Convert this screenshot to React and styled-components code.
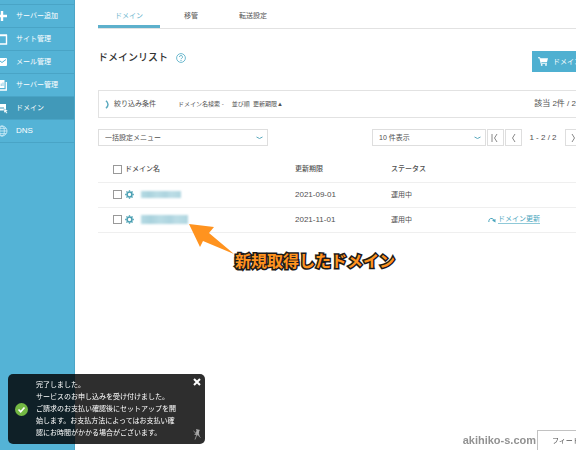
import React from "react";
import styled, { createGlobalStyle } from "styled-components";

const Global = createGlobalStyle`
  * { box-sizing: border-box; }
  body {
    margin: 0;
    background: #fff;
    color: #505050;
    font-family: "Liberation Sans", "Noto Sans CJK JP", sans-serif;
    font-size: 7px;
    line-height: 12px;
    overflow: hidden;
  }
  button, select, input { font: inherit; color: inherit; margin: 0; }
`;

const Page = styled.div`
  display: flex;
  min-height: 100vh;
  overflow: hidden;
`;

const Sidebar = styled.nav`
  flex: 0 0 75px;
  padding-top: 4px;
  background: #54b3d6;
  border-right: 1px solid #4ba5c7;
`;

const NavItem = styled.a`
  display: flex;
  align-items: center;
  gap: 8px;
  height: 23px;
  border-top: 1px solid #49a4c6;
  background: ${(p) => (p.$active ? "#4199b9" : "transparent")};
  color: #fff;
  text-decoration: none;
  white-space: nowrap;
  font-size: ${(p) => (p.$latin ? "8px" : "7px")};
  svg { flex: none; margin-left: -4px; }
`;

const NavEnd = styled.div`
  border-top: 1px solid #49a4c6;
`;

const Main = styled.main`
  flex: 1;
  min-width: 0;
  padding-left: 23px;
  overflow: hidden;
`;

const Content = styled.div`
  margin-right: -24px;
`;

const Tabs = styled.div`
  display: flex;
  height: 29px;
  border-bottom: 1px solid #e2e2e2;
`;

const Tab = styled.button`
  width: 62px;
  height: 28px;
  padding: 6px 0 0;
  border: 0;
  border-bottom: 3px solid ${(p) => (p.$active ? "#5db0cc" : "transparent")};
  background: none;
  color: ${(p) => (p.$active ? "#6db6ce" : "#555")};
`;

const TitleBar = styled.header`
  display: flex;
  align-items: flex-start;
  gap: 8px;
  margin-top: 22px;
  height: 21px;
`;

const Title = styled.h1`
  margin: 0;
  font-size: 10px;
  line-height: 14px;
  font-weight: 500;
  color: #333;
`;

const HelpButton = styled.button`
  display: flex;
  padding: 2px 0;
  border: 0;
  background: none;
`;

const BuyButton = styled.button`
  display: flex;
  align-items: center;
  gap: 5px;
  width: 68px;
  height: 21px;
  margin-left: auto;
  padding: 0 6px;
  border: 0;
  background: #4fb0d1;
  color: #fff;
  white-space: nowrap;
  svg { flex: none; }
`;

const Filter = styled.section`
  display: flex;
  align-items: center;
  height: 28px;
  margin-top: 18px;
  padding: 0 23px 0 6px;
  border: 1px solid #e2e2e2;
`;

const FilterToggle = styled.button`
  display: flex;
  align-items: center;
  gap: 4px;
  padding: 0;
  border: 0;
  background: none;
`;

const FilterTerms = styled.div`
  display: flex;
  gap: 8px;
  margin-left: 22px;
  font-size: 6px;
`;

const Count = styled.div`
  margin-left: auto;
  font-size: 8px;
  white-space: nowrap;
`;

const Controls = styled.div`
  display: flex;
  align-items: center;
  margin-top: 11px;
  height: 17px;
`;

const SelectBox = styled.label`
  display: grid;
  grid-template-columns: 1fr;
  align-items: center;
  width: ${(p) => (p.$wide ? "170px" : "114px")};
  height: 17px;
  border: 1px solid #dedede;
  svg {
    grid-area: 1 / 1;
    justify-self: end;
    margin-right: 3px;
    pointer-events: none;
  }
`;

const Select = styled.select`
  grid-area: 1 / 1;
  width: 100%;
  height: 15px;
  padding: 0 6px;
  border: 0;
  background: transparent;
  appearance: none;
`;

const Pager = styled.div`
  display: flex;
  align-items: center;
  margin-left: auto;
`;

const PageButton = styled.button`
  display: flex;
  align-items: center;
  justify-content: center;
  width: 17px;
  height: 17px;
  margin-left: 1px;
  padding: 0;
  border: 1px solid #dedede;
  background: #fff;
`;

const Range = styled.span`
  width: 42px;
  font-size: 8px;
  text-align: center;
  white-space: nowrap;
`;

const Table = styled.table`
  width: 100%;
  margin-top: 11px;
  border-collapse: collapse;
  table-layout: fixed;
`;

const Col = styled.col`
  width: ${(p) => p.$w};
`;

const Row = styled.tr`
  height: 25px;
  border-bottom: 1px solid #efefef;
`;

const Head = styled.th`
  padding: 0;
  font-weight: 500;
  text-align: left;
`;

const Cell = styled.td`
  padding: 0;
  font-size: ${(p) => (p.$date ? "8px" : "7px")};
`;

const NameCell = styled.div`
  display: flex;
  align-items: center;
  gap: 3px;
  padding-left: 15px;
`;

const Checkbox = styled.input`
  appearance: none;
  width: 9px;
  height: 9px;
  border: 1px solid #999;
  background: #fff;
  &:checked { background: #4fb0d1; }
`;

const GearButton = styled.button`
  display: flex;
  padding: 0;
  border: 0;
  background: none;
`;

const Redacted = styled.span`
  width: ${(p) => (p.$long ? "47px" : "40px")};
  height: ${(p) => (p.$long ? "9px" : "7px")};
  margin-left: 4px;
  background: linear-gradient(90deg, #b5dbe4, #a9d2dd 20%, #b9dce5 40%, #add4df 62%, #bcdde6 75%, #b0d6e0);
  filter: blur(1px);
`;

const RenewLink = styled.a`
  display: flex;
  align-items: center;
  gap: 2px;
  color: #4aa5bd;
  text-decoration: none;
  span { border-bottom: 1px solid #8fc9d8; line-height: 8px; }
`;

const Arrow = styled.svg`
  position: absolute;
  left: 189px;
  top: 223px;
`;

const Note = styled.strong`
  position: absolute;
  left: 235px;
  top: 250px;
  font-size: 16px;
  line-height: 24px;
  font-weight: 700;
  color: #ff931f;
  -webkit-text-stroke: 3px #1a1a1a;
  paint-order: stroke fill;
  white-space: nowrap;
`;

const Toast = styled.div`
  position: fixed;
  left: 8px;
  bottom: 6px;
  display: flex;
  align-items: center;
  width: 197px;
  height: 70px;
  padding: 0 4px 0 7px;
  border-radius: 5px;
  background: rgba(0, 0, 0, 0.82);
  color: #fff;
`;

const ToastText = styled.p`
  flex: 1;
  margin: 0 0 0 8px;
  white-space: nowrap;
`;

const ToastTools = styled.div`
  display: flex;
  flex-direction: column;
  justify-content: space-between;
  height: 62px;
`;

const ToolButton = styled.button`
  display: flex;
  padding: 0;
  border: 0;
  background: none;
`;

const Corner = styled.footer`
  position: fixed;
  right: 0;
  bottom: 0;
  display: flex;
  gap: 1px;
  height: 20px;
`;

const Watermark = styled.span`
  font-size: 11px;
  line-height: 20px;
  font-weight: 700;
  color: #929292;
`;

const Feedback = styled.button`
  width: 39px;
  padding: 0 0 0 14px;
  border: 1px solid #c2c2c2;
  border-width: 1px 0 0 1px;
  background: #fff;
  text-align: left;
  white-space: nowrap;
  overflow: hidden;
`;

const navIcons = {
  add: <path d="M6 1v10M1 6h10" stroke="#fff" strokeWidth="2.4" fill="none" />,
  site: <path d="M1.5 2.5h9v8.5h-9zM1 2h10" stroke="#fff" strokeWidth="1.4" fill="none" />,
  mail: (
    <>
      <rect x="1" y="2" width="10" height="8" rx="1" fill="#fff" />
      <path d="M2 3.5l4 3 4-3" stroke="#54b3d6" fill="none" />
    </>
  ),
  server: (
    <>
      <path d="M1 1h7.500v8H1z" fill="#fff" />
      <path d="M10.300 3v8H3" stroke="#fff" strokeWidth="1.300" fill="none" />
      <path d="M5.200 7V4.500M7 7V3.500" stroke="#54b3d6" strokeWidth=".7" fill="none" />
    </>
  ),
  domain: (
    <>
      <path d="M1 2h9v6.500H1z" fill="#fff" />
      <path d="M2 6h6" stroke="#4199b9" fill="none" />
      <path d="M8 7l4 1.500-1.500.8 1 1.700-1.500.5-.7-1.500-1.300.9z" fill="#fff" stroke="#4199b9" strokeWidth=".4" />
    </>
  ),
  dns: (
    <g stroke="#d5f0fa" strokeWidth=".8" fill="none">
      <circle cx="6" cy="6" r="5" />
      <ellipse cx="6" cy="6" rx="2.300" ry="5" />
      <path d="M1 6h10M2 3.300h8M2 8.700h8" />
    </g>
  ),
};

const navItems = [
  ["add", "サーバー追加"],
  ["site", "サイト管理"],
  ["mail", "メール管理"],
  ["server", "サーバー管理"],
  ["domain", "ドメイン"],
  ["dns", "DNS"],
];

const Chevron = ({ dir = "right", bar, color = "#888" }) => {
  const d = {
    right: "M3 1l2.500 4L3 9",
    left: "M6 1L3.500 5 6 9",
    down: "M1.500 4Q4.500 7 7.500 4",
  }[dir];
  return (
    <svg width="9" height="10" viewBox="0 0 9 10" fill="none" stroke={color} strokeWidth="1">
      <path d={d} />
      {bar && <path d="M1 1v8" />}
    </svg>
  );
};

const Gear = () => (
  <svg width="9" height="9" viewBox="0 0 10 10" fill="none" stroke="#4a9fb2">
    <circle cx="5" cy="5" r="2.700" strokeWidth="1.700" />
    <path
      d="M5 .2v1.500M5 8.300v1.500M.2 5h1.500M8.300 5h1.500M1.600 1.600l1 1M7.400 7.400l1 1M8.400 1.600l-1 1M1.600 8.400l1-1"
      strokeWidth="1.500"
    />
  </svg>
);

const domains = [
  { id: "a", date: "2021-09-01", long: false, renew: false },
  { id: "b", date: "2021-11-01", long: true, renew: true },
];

export default function App() {
  return (
    <>
      <Global />
      <Page lang="ja">
        <Sidebar>
          {navItems.map(([icon, label]) => (
            <NavItem href="#" key={icon} $active={icon === "domain"} $latin={icon === "dns"}>
              <svg width="12" height="12" viewBox="0 0 12 12">{navIcons[icon]}</svg>
              {label}
            </NavItem>
          ))}
          <NavEnd />
        </Sidebar>
        <Main>
          <Content>
            <Tabs>
              <Tab $active>ドメイン</Tab>
              <Tab>移管</Tab>
              <Tab>転送設定</Tab>
            </Tabs>
            <TitleBar>
              <Title>ドメインリスト</Title>
              <HelpButton aria-label="ヘルプ">
                <svg width="10" height="10" viewBox="0 0 10 10" fill="none" stroke="#5fb2c9">
                  <circle cx="5" cy="5" r="4.400" strokeWidth=".9" />
                  <path d="M3.500 4a1.500 1.500 0 1 1 2.200 1.300Q5 5.600 5 6.200M5 7v1" />
                </svg>
              </HelpButton>
              <BuyButton>
                <svg width="10" height="9" viewBox="0 0 10 9" fill="#fff">
                  <path d="M0 .3h2l.4 1H10L9 5H3.300l.2.8H9v.9H2.700L1.400 1.200H0z" />
                  <circle cx="3.700" cy="7.900" r=".9" />
                  <circle cx="8" cy="7.900" r=".9" />
                </svg>
                ドメイン
              </BuyButton>
            </TitleBar>
            <Filter>
              <FilterToggle>
                <svg width="5" height="9" viewBox="0 0 5 9">
                  <path d="M1 .8Q5 4.500 1 8.200" fill="none" stroke="#5aa9be" strokeWidth="1.500" />
                </svg>
                絞り込み条件
              </FilterToggle>
              <FilterTerms>
                <span>ドメイン名検索 -</span>
                <span>並び順&nbsp; 更新期限▲</span>
              </FilterTerms>
              <Count>該当 2件 / 2</Count>
            </Filter>
            <Controls>
              <SelectBox $wide>
                <Select aria-label="一括設定"><option>一括設定メニュー</option></Select>
                <Chevron dir="down" color="#5aa9be" />
              </SelectBox>
              <Pager>
                <SelectBox>
                  <Select aria-label="表示件数"><option>10 件表示</option></Select>
                  <Chevron dir="down" color="#5aa9be" />
                </SelectBox>
                <PageButton aria-label="最初"><Chevron dir="left" bar /></PageButton>
                <PageButton aria-label="前へ"><Chevron dir="left" /></PageButton>
                <Range>1 - 2 / 2</Range>
                <PageButton aria-label="次へ"><Chevron /></PageButton>
                <PageButton aria-label="最後"><Chevron /></PageButton>
              </Pager>
            </Controls>
            <Table>
              <colgroup>
                <Col $w="197px" />
                <Col $w="96px" />
                <Col $w="97px" />
                <Col $w="auto" />
              </colgroup>
              <thead>
                <Row>
                  <Head>
                    <NameCell>
                      <Checkbox type="checkbox" aria-label="すべて選択" />
                      ドメイン名
                    </NameCell>
                  </Head>
                  <Head>更新期限</Head>
                  <Head>ステータス</Head>
                  <Head />
                </Row>
              </thead>
              <tbody>
                {domains.map((d) => (
                  <Row key={d.id}>
                    <Cell>
                      <NameCell>
                        <Checkbox type="checkbox" aria-label="選択" />
                        <GearButton aria-label="設定"><Gear /></GearButton>
                        <Redacted $long={d.long} />
                      </NameCell>
                    </Cell>
                    <Cell $date>{d.date}</Cell>
                    <Cell>運用中</Cell>
                    <Cell>
                      {d.renew && (
                        <RenewLink href="#">
                          <svg width="8" height="7" viewBox="0 0 8 7" fill="none" stroke="#4aa5bd">
                            <path d="M.8 6Q.8 2 4 2.500 6 3 6 5" />
                            <path d="M4 4.500L7.500 3v3.500z" fill="#4aa5bd" stroke="none" />
                          </svg>
                          <span>ドメイン更新</span>
                        </RenewLink>
                      )}
                    </Cell>
                  </Row>
                ))}
              </tbody>
            </Table>
          </Content>
        </Main>
        <Arrow width="46" height="33" viewBox="0 0 46 33">
          <path d="M0 1L25 4 20 10 45 31 14 18 11 24z" fill="#ff931f" />
        </Arrow>
        <Note>新規取得したドメイン</Note>
        <Toast role="status">
          <svg width="13" height="13" viewBox="0 0 13 13">
            <circle cx="6.500" cy="6.500" r="6.500" fill="#73b843" />
            <path d="M3.500 6.500l2.200 2.300L9.500 4.500" fill="none" stroke="#fff" strokeWidth="1.700" />
          </svg>
          <ToastText>
            完了しました。<br />
            サービスのお申し込みを受け付けました。<br />
            ご請求のお支払い確認後にセットアップを開<br />
            始します。お支払方法によってはお支払い確<br />
            認にお時間がかかる場合がございます。
          </ToastText>
          <ToastTools>
            <ToolButton aria-label="閉じる">
              <svg width="8" height="8" viewBox="0 0 8 8" stroke="#fff" strokeWidth="2">
                <path d="M1 1l6 6M7 1L1 7" />
              </svg>
            </ToolButton>
            <ToolButton aria-label="固定">
              <svg width="8" height="11" viewBox="0 0 8 11">
                <path d="M3 0l4 1-.8 1-.4 3 1.200 1.800L1 5.500 2.800 4.300 3.500 1.500z" fill="#aaa" />
                <path d="M3.700 6L2 10.500M.5 2l7 6.500" stroke="#999" strokeWidth=".9" />
              </svg>
            </ToolButton>
          </ToastTools>
        </Toast>
        <Corner>
          <Watermark>akihiko-s.com</Watermark>
          <Feedback>フィード</Feedback>
        </Corner>
      </Page>
    </>
  );
}
